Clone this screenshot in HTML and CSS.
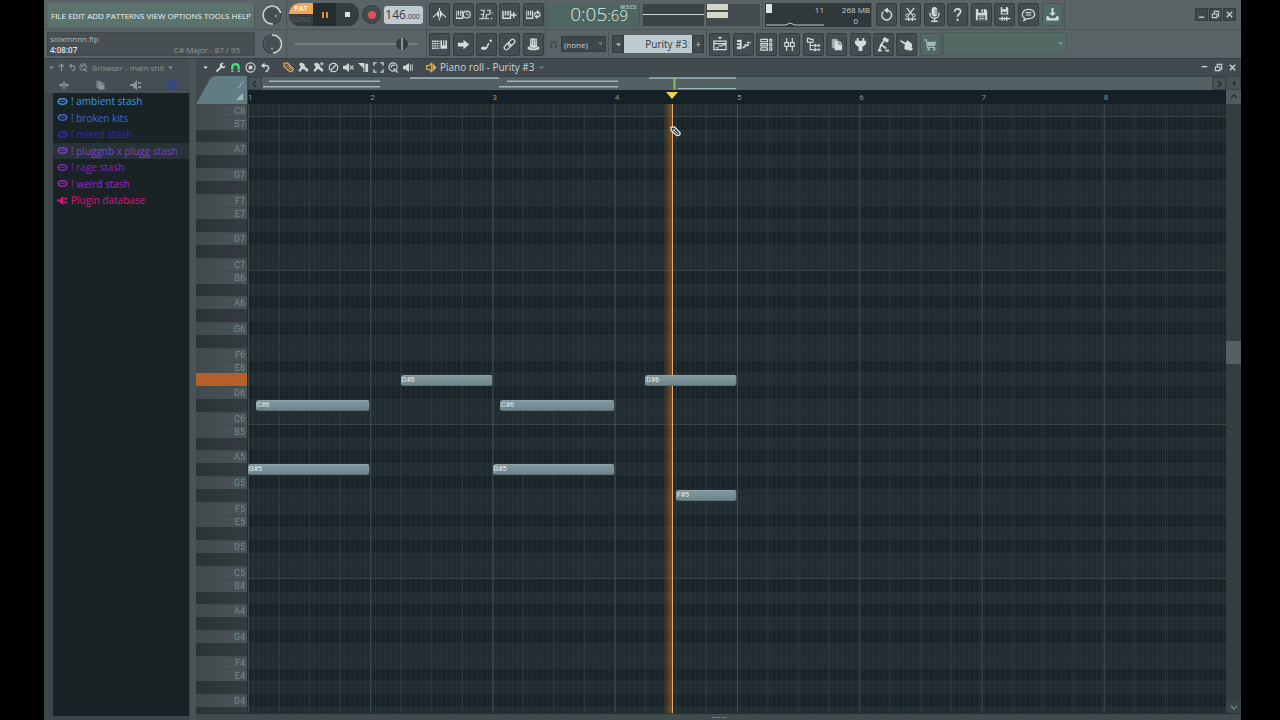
FILE: index.html
```html
<!DOCTYPE html>
<html lang="en">
<head>
<meta charset="utf-8">
<title>Piano roll - Purity #3</title>
<link rel="stylesheet" href="styles.css">
</head>
<body>
<svg class="sprite" aria-hidden="true">
  <symbol id="metronome" viewBox="0 0 16 16"><path d="M8 1v13M7.500 5 1 11M8.500 5l6.500 6" fill="none" stroke="currentColor" stroke-width="1.200"/><path d="M6.500 4h3l1.500 4-3 5-3-5z" fill="currentColor"/><path d="M8 4v8" stroke="#434c4f" stroke-width=".800"/></symbol>
  <symbol id="wait" viewBox="0 0 16 16"><path d="M0 4v8h7V8M2.500 4v5M5 4v5M7 4v3" fill="none" stroke="currentColor" stroke-width="1.400"/><circle cx="11.500" cy="8" r="3.700" fill="none" stroke="currentColor" stroke-width="1.300"/><path d="M11.500 6v2.300h2" fill="none" stroke="currentColor"/></symbol>
  <symbol id="count" viewBox="0 0 16 16"><path d="M1.500 3.500H5.500L4.800 8H2M4.800 8 4 12.500H0M8.500 3.500h3.500L11.300 8H8l-.700 4.500h3.500M5.500 11.500v1.500M14 5.500V7M13.500 11.500V13" fill="none" stroke="currentColor" stroke-width="1.200"/></symbol>
  <symbol id="overdub" viewBox="0 0 16 16"><path d="M1 4v8h8V4M3.700 4v5M6.400 4v5M12.500 5.500v6M9.500 8.500h6" fill="none" stroke="currentColor" stroke-width="1.600"/></symbol>
  <symbol id="looprec" viewBox="0 0 16 16"><path d="M0 4v8h7V4M2.400 4v5M4.800 4v5" fill="none" stroke="currentColor" stroke-width="1.400"/><path d="M9 9c0-3 2-4 4-3M15 7c0 3-2 4-4 3" fill="none" stroke="currentColor" stroke-width="1.500"/><path d="m12 3 3 3-3 2zM12 8l-3 2 3 3z" fill="currentColor"/></symbol>
  <symbol id="typing" viewBox="0 0 16 16"><path d="M0 4.500h8M0 7h8M0 9.500h8M0 12h8" stroke="currentColor" stroke-width="1.500" stroke-dasharray="1.800 .600"/><path d="M9 3.500h7v9H9z" fill="currentColor"/><path d="M11.300 3v6M13.700 3v6" stroke="#394346" stroke-width="1.100"/></symbol>
  <symbol id="arrow" viewBox="0 0 16 16"><path d="M2 6h6V3l6 5-6 5v-3H2z" fill="currentColor"/></symbol>
  <symbol id="slide" viewBox="0 0 16 16"><path d="M4 12c6 1 4-2 6.500-5.500" fill="none" stroke="currentColor" stroke-width="1.600"/><ellipse cx="5" cy="12" rx="3" ry="1.800" fill="currentColor"/><circle cx="12.500" cy="4" r="1.300" fill="currentColor"/></symbol>
  <symbol id="link" viewBox="0 0 16 16"><g fill="none" stroke="currentColor" stroke-width="1.400" transform="rotate(-45 8 8)"><rect x="1" y="5.700" width="8" height="4.600" rx="2.300"/><rect x="7" y="5.700" width="8" height="4.600" rx="2.300"/></g></symbol>
  <symbol id="hat" viewBox="0 0 16 16"><path d="M4.500 1.500h7l.400 8.500c1.600.300 2.600.900 2.600 1.700 0 3.300-13 3.300-13 0 0-.800 1-1.400 2.600-1.700z" fill="currentColor"/><path d="M5.800 2.500 5.500 9M8 3v6M10.200 2.500l.300 6.500M4 11c2 1.200 6 1.200 8 0" stroke="#6c787a" stroke-width=".800" fill="none"/></symbol>
  <symbol id="playlist" viewBox="0 0 16 16"><path d="M6 0h5L8.500 2.500z" fill="currentColor"/><path d="M2 4.500h13v9H2zM2 7h13M4 11.500h3M7 9.500h4M11 8.500h3" fill="none" stroke="currentColor" stroke-width="1.300"/></symbol>
  <symbol id="roll" viewBox="0 0 16 16"><path d="M1 3h5v10H1z" fill="currentColor"/><path d="M1 6h3M1 9.500h3" stroke="#394346" stroke-width="1.200"/><path d="M7 11h3V8.500h2.500V6H16" fill="none" stroke="currentColor" stroke-width="2" stroke-dasharray="2.500 .800"/></symbol>
  <symbol id="rack" viewBox="0 0 16 16"><path d="M2 2.500h7V5H2zM2 7h7v2.500H2zM2 11.500h7V14H2zM11.500 2.500h2V5h-2zM11.500 7h2v2.500h-2zM11.500 11.500h2V14h-2z" fill="none" stroke="currentColor" stroke-width="1.200"/></symbol>
  <symbol id="mixer" viewBox="0 0 16 16"><path d="M5 1v14M11 1v14" stroke="currentColor" stroke-width="1.200"/><path d="M3 6h4v4H3zM9 6h4v4H9z" fill="#394346" stroke="currentColor" stroke-width="1.200"/></symbol>
  <symbol id="tree" viewBox="0 0 16 16"><path d="M1.500 5.500v-4h2l1 1h3v3zM4.500 6v7.500H9M4.500 9H9" fill="none" stroke="currentColor" stroke-width="1.200"/><path d="M9 6.500 12 9l-3 2.500zM9 11l3 2.500L9 16zM12 8h3v2h-3zM12 12.500h3v2h-3z" fill="currentColor"/></symbol>
  <symbol id="copy" viewBox="0 0 16 16"><path d="M3 2h6v10H3z" fill="currentColor" opacity=".650"/><path d="M6 4h5l3 3v7H6z" fill="currentColor"/><path d="M10.500 4v3.500H14" fill="none" stroke="#566064"/></symbol>
  <symbol id="plug" viewBox="0 0 16 16"><path d="M4 1h2v3h4V1h2v3h2v2c0 2-2 3-4 4.500V15H6v-4.500C4 9 2 8 2 6V4h2z" fill="currentColor"/></symbol>
  <symbol id="lamp" viewBox="0 0 16 16"><path d="m9 0 5 3-2 3-5-3z" fill="currentColor"/><path d="M9 3.500 5.500 8l5.500 4.500M5.500 8l-2 6M2 14.500h4M10 14.500h4" fill="none" stroke="currentColor" stroke-width="1.800"/></symbol>
  <symbol id="hand" viewBox="0 0 16 16"><path d="M1 4.500 2 3.500 7 6l2-2.500 5 4-.500 4 1.500 1-2.500 2.500-1.500-1-4-.500-2-2 1.500-.500-1-1.500 1.500-1z" fill="currentColor"/></symbol>
  <symbol id="cart" viewBox="0 0 16 16"><path d="M1 3h2.500l1.300 8H13" fill="none" stroke="currentColor" stroke-width="1.300"/><path d="M4 5h10l-1.300 4.500H4.700z" fill="currentColor"/><circle cx="6" cy="13" r="1.300" fill="currentColor"/><circle cx="12" cy="13" r="1.300" fill="currentColor"/></symbol>
  <symbol id="undo" viewBox="0 0 16 16"><path d="M9 3.500a5.200 5.200 0 1 1-4.500 1.500" fill="none" stroke="currentColor" stroke-width="1.500"/><path d="M9.500.500v6L5 3.500z" fill="currentColor"/></symbol>
  <symbol id="cut" viewBox="0 0 16 16"><path d="m4 1 6.500 8M12 1 5.500 9M2 13h12M6 11v4M10 11v4" fill="none" stroke="currentColor" stroke-width="1.400"/><circle cx="4.500" cy="9" r="1.500" fill="none" stroke="currentColor"/><circle cx="11.500" cy="9" r="1.500" fill="none" stroke="currentColor"/></symbol>
  <symbol id="mic" viewBox="0 0 16 16"><rect x="5" y="0" width="6" height="10" rx="3" fill="currentColor"/><path d="M3 6c0 8 10 8 10 0M8 12v3M4.500 15.200h7" fill="none" stroke="currentColor" stroke-width="1.500"/><path d="M8 3h3M8 5h3M8 7h3" stroke="#566064" stroke-width=".800"/></symbol>
  <symbol id="help" viewBox="0 0 16 16"><path d="M4.800 5c0-4 6.500-4 6.500 0 0 2.500-3.300 2.500-3.300 5.500M8 12.500V15" fill="none" stroke="currentColor" stroke-width="1.900"/></symbol>
  <symbol id="disk" viewBox="0 0 16 16"><path d="M2 2h10l2 2v10H2z" fill="currentColor"/><path d="M4.500 2h6v4h-6zM4 9h8v5H4z" fill="#465154"/><path d="M8 2.500h1.500v3H8zM5 10h6v1H5zM5 12h6v1H5z" fill="currentColor"/></symbol>
  <symbol id="saveas" viewBox="0 0 16 16"><path d="M4 0h7l1 1v7H4z" fill="currentColor"/><path d="M5.500 0h4v2.500h-4zM5.500 5h5v2h-5z" fill="#465154"/><path d="M2 12.500h12M5.500 10v5M8 11v3M10.500 10v5" stroke="currentColor" stroke-width="1.300"/></symbol>
  <symbol id="chat" viewBox="0 0 16 16"><path d="M3 14.500 4 12C-1 9 2 2.500 8 2.500s9 6.500 4 9c-2 1-5 1-5 1z" fill="none" stroke="currentColor" stroke-width="1.300"/><path d="M5 6h6M5 8.500h6" stroke="currentColor" stroke-width="1.200"/></symbol>
  <symbol id="download" viewBox="0 0 16 16"><path d="M7 1h2v5h2.500L8 9.500 4.500 6H7zM1.500 9.500 4 10l1 2h6l1-2 2.500-.500v5h-13z" fill="currentColor"/></symbol>
  <symbol id="min" viewBox="0 0 10 10"><path d="M2 8h6" stroke="currentColor" stroke-width="1.500"/></symbol>
  <symbol id="dash" viewBox="0 0 10 10"><path d="M2 4h6" stroke="currentColor" stroke-width="1.500"/></symbol>
  <symbol id="max" viewBox="0 0 10 10"><path d="M1.500 4.500h5v4h-5zM3.500 4V1.500h5V7H7" fill="none" stroke="currentColor" stroke-width="1.200"/></symbol>
  <symbol id="close" viewBox="0 0 10 10"><path d="m2 2 6 6M8 2 2 8" stroke="currentColor" stroke-width="1.500"/></symbol>
  <symbol id="down" viewBox="0 0 10 10"><path d="M1.500 3.500h7L5 7z" fill="currentColor"/></symbol>
  <symbol id="up" viewBox="0 0 12 12"><path d="M6 11V2M3 5l3-3.500L9 5" fill="none" stroke="currentColor" stroke-width="1.600"/></symbol>
  <symbol id="back" viewBox="0 0 12 12"><path d="M4 3.800h2c5 0 4 5 0 7" fill="none" stroke="currentColor" stroke-width="1.700"/><path d="M5 .500v6.500L1 3.800z" fill="currentColor"/></symbol>
  <symbol id="search" viewBox="0 0 12 12"><circle cx="5.500" cy="5.500" r="4.500" fill="none" stroke="currentColor" stroke-width="1.200"/><path d="M3.500 6c0-3 3-3 4-2M6 7l4.500 4.500" fill="none" stroke="currentColor" stroke-width="1.500"/></symbol>
  <symbol id="wave" viewBox="0 0 12 12"><path d="M1 6h10M3.500 4v4M6 2v8M8.500 4v4" stroke="currentColor" stroke-width="1.300"/></symbol>
  <symbol id="speaker" viewBox="0 0 12 12"><path d="M0 5h3l4-4v10L3 8V7H0zM8 3h3v1.800H8zM8 7.200h3V9H8z" fill="currentColor"/></symbol>
  <symbol id="channel" viewBox="0 0 12 12"><path d="M.700 4h2.500L6 1.500v9L3.200 8H.700z" fill="none" stroke="currentColor" stroke-width="1.300"/><path d="M7 1l4.500 5L7 11z" fill="currentColor"/></symbol>
  <symbol id="globe" viewBox="0 0 12 12"><circle cx="6" cy="6" r="5.500" fill="currentColor"/><path d="M1 4h10M1 8h10M6 1v10" stroke="#464f58" stroke-width=".500"/></symbol>
  <symbol id="lips" viewBox="0 0 12 12"><ellipse cx="6" cy="6" rx="4.500" ry="3" fill="none" stroke="currentColor" stroke-width="1.500"/><path d="M0 6h2M10 6h2M3.500 6h5" stroke="currentColor" stroke-width=".800"/></symbol>
  <symbol id="wrench" viewBox="0 0 12 12"><path d="m1.500 10.500 5-5" stroke="currentColor" stroke-width="2.200"/><path d="M9.500 1C6 0 4.500 3 5.500 5.500 8 8 11 7 11.500 4L9 5 7.500 3.500z" fill="currentColor"/></symbol>
  <symbol id="magnet" viewBox="0 0 12 12"><path d="M2.500 11V6c0-5 7-5 7 0v5" fill="none" stroke="currentColor" stroke-width="2.500"/><path d="M1 8.700h3M8 8.700h3" stroke="#3b4549" stroke-width=".800"/></symbol>
  <symbol id="target" viewBox="0 0 12 12"><circle cx="6" cy="6" r="5" fill="none" stroke="currentColor" stroke-width="1.200"/><path d="M4 4h4v4H4z" fill="currentColor"/></symbol>
  <symbol id="pencil" viewBox="0 0 12 12"><path d="M1 1.500 5 1l6 6.500c.500 2-1.500 3.500-3.500 3L1.500 5z" fill="none" stroke="currentColor" stroke-width="1.400"/><path d="m3.500 3.500 5.500 5.500M5 3l5 5" stroke="currentColor" stroke-width="1"/></symbol>
  <symbol id="brush" viewBox="0 0 12 12"><path d="m1 2 3-1.500 3 2 .500 2.500 4 3.500L10 11 6.500 8 5 7.500 2 11 .500 9 3 6z" fill="currentColor"/></symbol>
  <symbol id="brush-plus" viewBox="0 0 12 12"><path d="m1 2 3-1.500 3 2 .500 2.500 4 3.500L10 11 6.500 8 5 7.500 2 11 .500 9 3 6zM9 0h1.200v4H9z" fill="currentColor"/><path d="M7.800 2h3.800" stroke="currentColor" stroke-width="1.200"/></symbol>
  <symbol id="no" viewBox="0 0 12 12"><circle cx="6" cy="6" r="4.600" fill="none" stroke="currentColor" stroke-width="1.300"/><path d="m3 9 6-6" stroke="currentColor" stroke-width="1.300"/></symbol>
  <symbol id="mute" viewBox="0 0 12 12"><path d="M0 4h2.500L6.500 1v10l-4-3H0z" fill="currentColor"/><path d="m7.500 4 4 4M11.500 4l-4 4" stroke="currentColor" stroke-width="1.300"/></symbol>
  <symbol id="slice" viewBox="0 0 12 12"><path d="M0 1h7v7zM6 8h1v3H6zM8 2h3v9H8z" fill="currentColor"/></symbol>
  <symbol id="select" viewBox="0 0 12 12"><path d="M1 4V1h3M8 1h3v3M11 8v3H8M4 11H1V8" fill="none" stroke="currentColor" stroke-width="1.400"/></symbol>
  <symbol id="play" viewBox="0 0 12 12"><path d="M0 4h2.500L6.500 1v10l-4-3H0zM7.500 2.500h1v7h-1zM9.500 2.500h1v7h-1z" fill="currentColor"/></symbol>
</svg>

<div class="app">
  <header class="toolbar">
    <div class="bar bar-top">
      <nav class="menu" aria-label="Main menu">
        <button>FILE</button><button>EDIT</button><button>ADD</button><button>PATTERNS</button><button>VIEW</button><button>OPTIONS</button><button>TOOLS</button><button>HELP</button>
      </nav>
      <div class="knob-cell"><svg viewBox="0 0 20 20" role="img" aria-label="Main volume"><circle cx="10" cy="10" r="9" fill="none" stroke="#3b4447" stroke-width="1.500"/><circle cx="10" cy="10" r="7.500" fill="#454e51"/><path d="M11 19A9 9 0 1 1 18.800 8" fill="none" stroke="#d0d8d9" stroke-width="1.500"/><circle cx="14" cy="11" r="1" fill="#aab3b5"/></svg></div>
      <div class="transport">
        <div class="pill">
          <div class="mode"><button class="pat">PAT</button><button class="song">SONG</button></div>
          <button class="pause" aria-label="Pause"><i></i><i></i></button>
          <button class="stop" aria-label="Stop"><i></i></button>
        </div>
        <button class="record" aria-label="Record"><i></i></button>
        <div class="tempo">146<small>.000</small><span>:</span></div>
      </div>
      <div class="tools five">
        <button aria-label="Metronome"><svg><use href="#metronome"/></svg></button><button aria-label="Wait for input"><svg><use href="#wait"/></svg></button><button aria-label="Countdown"><svg><use href="#count"/></svg></button><button aria-label="Overdub"><svg><use href="#overdub"/></svg></button><button aria-label="Loop record"><svg><use href="#looprec"/></svg></button>
      </div>
      <div class="clock"><span>0:05<small>:69</small></span><sup>M:S:CS</sup></div>
      <div class="scope"><div class="osc"></div><div class="vu"><i></i></div></div>
      <div class="cpu"><i class="cpu-load"></i><span class="cpu-poly">11</span><span class="cpu-mem">268 MB</span><span class="cpu-count">0</span>
        <svg viewBox="0 0 60 4" preserveAspectRatio="none"><path d="M0 3h20l5-2 5 2h30" fill="none" stroke="#c4cdcf"/></svg></div>
      <div class="tools eight">
        <button aria-label="Undo"><svg><use href="#undo"/></svg></button><button aria-label="Cut"><svg><use href="#cut"/></svg></button><button aria-label="Record audio"><svg><use href="#mic"/></svg></button><button aria-label="Help"><svg><use href="#help"/></svg></button><button aria-label="Save"><svg><use href="#disk"/></svg></button><button aria-label="Save new version"><svg><use href="#saveas"/></svg></button><button aria-label="Chat"><svg><use href="#chat"/></svg></button><button class="green" aria-label="Download"><svg><use href="#download"/></svg></button>
      </div>
      <div class="window-buttons"><button aria-label="Minimize"><svg><use href="#min"/></svg></button><button aria-label="Restore"><svg><use href="#max"/></svg></button><button aria-label="Close"><svg><use href="#close"/></svg></button></div>
    </div>
    <div class="bar bar-bottom">
      <div class="hint"><span>solxmnnn.flp</span><div><b>4:08:07</b><span>C# Major - 87 / 95</span></div></div>
      <div class="knob-cell"><svg viewBox="0 0 20 20" role="img" aria-label="Main pitch"><circle cx="10" cy="10" r="9" fill="none" stroke="#3b4447" stroke-width="1.500"/><circle cx="10" cy="10" r="7.500" fill="#454e51"/><path d="M10 1a9 9 0 0 1 1 18" fill="none" stroke="#d0d8d9" stroke-width="1.500"/><circle cx="10" cy="14.500" r="1" fill="#aab3b5"/></svg></div>
      <div class="position"><input type="range" min="0" max="100" value="91" aria-label="Song position"></div>
      <div class="tools five">
        <button aria-label="Typing keyboard"><svg><use href="#typing"/></svg></button><button aria-label="Scroll"><svg><use href="#arrow"/></svg></button><button aria-label="Slide"><svg><use href="#slide"/></svg></button><button aria-label="Link controllers"><svg><use href="#link"/></svg></button><button aria-label="Metronome options"><svg><use href="#hat"/></svg></button>
      </div>
      <div class="snap"><svg><use href="#magnet"/></svg><label class="combo"><select aria-label="Snap"><option>(none)</option></select><svg><use href="#down"/></svg></label></div>
      <div class="pattern"><button aria-label="Pattern menu"><svg><use href="#down"/></svg></button><div class="pattern-name">Purity #3<span>:</span></div><button>+</button></div>
      <div class="tools ten">
        <button aria-label="Playlist"><svg><use href="#playlist"/></svg></button><button aria-label="Piano roll"><svg><use href="#roll"/></svg></button><button aria-label="Channel rack"><svg><use href="#rack"/></svg></button><button aria-label="Mixer"><svg><use href="#mixer"/></svg></button><button aria-label="Browser"><svg><use href="#tree"/></svg></button><button aria-label="Project picker"><svg><use href="#copy"/></svg></button><button aria-label="Plugins"><svg><use href="#plug"/></svg></button><button aria-label="Tempo tapper"><svg><use href="#lamp"/></svg></button><button aria-label="Touch"><svg><use href="#hand"/></svg></button><button class="green shop" aria-label="Shop"><svg><use href="#cart"/></svg></button>
      </div>
      <div class="news"><svg><use href="#down"/></svg></div>
      <div></div>
    </div>
  </header>

  <main class="workspace">
    <aside class="browser">
      <div class="browser-title"><svg class="tiny"><use href="#down"/></svg><svg><use href="#up"/></svg><svg><use href="#back"/></svg><svg><use href="#search"/></svg><span>Browser - main shit</span><svg class="tiny"><use href="#down"/></svg></div>
      <div class="browser-tabs"><button aria-label="All"><svg><use href="#wave"/></svg></button><button aria-label="Files"><svg><use href="#copy"/></svg></button><button aria-label="Plugins"><svg><use href="#speaker"/></svg></button><button class="web" aria-label="Online"><svg><use href="#globe"/></svg></button></div>
      <ul class="tree">
        <li class="c1"><svg><use href="#lips"/></svg>! ambient stash</li>
        <li class="c2"><svg><use href="#lips"/></svg>! broken kits</li>
        <li class="c3"><svg><use href="#lips"/></svg>! mixed stash</li>
        <li class="c4 current"><svg><use href="#lips"/></svg>! pluggnb x plugg stash</li>
        <li class="c5"><svg><use href="#lips"/></svg>! rage stash</li>
        <li class="c6"><svg><use href="#lips"/></svg>! weird stash</li>
        <li class="c7"><svg><use href="#speaker"/></svg>Plugin database</li>
      </ul>
    </aside>

    <section class="roll">
      <div class="roll-title">
        <button aria-label="Menu"><svg class="tiny"><use href="#down"/></svg></button><button aria-label="Tools"><svg><use href="#wrench"/></svg></button><button class="lime" aria-label="Snap"><svg><use href="#magnet"/></svg></button><button aria-label="Stamp"><svg><use href="#target"/></svg></button><button aria-label="Undo"><svg><use href="#back"/></svg></button>
        <button class="amber gap" aria-label="Draw"><svg><use href="#pencil"/></svg></button><button aria-label="Paint"><svg><use href="#brush"/></svg></button><button aria-label="Paint drums"><svg><use href="#brush-plus"/></svg></button><button aria-label="Delete"><svg><use href="#no"/></svg></button><button aria-label="Mute"><svg><use href="#mute"/></svg></button><button aria-label="Slice"><svg><use href="#slice"/></svg></button><button aria-label="Select"><svg><use href="#select"/></svg></button><button aria-label="Zoom"><svg><use href="#search"/></svg></button><button aria-label="Playback"><svg><use href="#play"/></svg></button>
        <h1><svg class="amber"><use href="#channel"/></svg>Piano roll - Purity #3<svg class="tiny"><use href="#down"/></svg></h1>
        <div class="roll-window"><button aria-label="Minimize"><svg><use href="#dash"/></svg></button><button aria-label="Restore"><svg><use href="#max"/></svg></button><button aria-label="Close"><svg><use href="#close"/></svg></button></div>
      </div>
      <div class="roll-body">
        <div class="corner"><svg viewBox="0 0 51 28" preserveAspectRatio="none"><path d="M0 28 14 3Q16 0 20 0h31v28z" fill="#627c83"/><path d="M41 12c5 0 2-6 7-6" fill="none" stroke="#a5b4b7"/><path d="M40 24h7v-7z" fill="#a5b4b7"/></svg></div>
        <div class="overview">
          <button aria-label="Scroll left"><svg viewBox="0 0 10 10"><path d="M6 2 3 5l3 3" fill="none" stroke="#222b2e" stroke-width="1.400"/></svg></button>
          <svg viewBox="0 0 950 14" preserveAspectRatio="none"><path d="M7 4.500h111M1 10.500h117M148 1h89M245 4.500h111M237 10.500h119M387 1h87M416 12.500h58" stroke="#9db4ba" stroke-width="1.500"/><path d="M412.500 0v14" stroke="#8ebf5a" stroke-width="2"/></svg>
          <button aria-label="Scroll right"><svg viewBox="0 0 10 10"><path d="m4 2 3 3-3 3" fill="none" stroke="#222b2e" stroke-width="1.400"/></svg></button>
        </div>
        <button class="side-btn" aria-label="Preview"><svg viewBox="0 0 10 10"><path d="M4 3h1.500L7 5 5.500 7H4z" fill="#222b2e"/></svg></button>
        <div class="ruler"><span>1</span><span>2</span><span>3</span><span>4</span><span>5</span><span>6</span><span>7</span><span>8</span><i></i></div>
        <div class="keys"><div class="rows" id="keys"></div></div>
        <div class="grid">
          <div class="rows lanes" id="lanes"></div>
          <div class="lines"></div>
          <div class="playhead"></div>
          <div class="notes" id="notes"></div>
          <svg class="cursor" viewBox="0 0 12 12"><path d="M1 1.500 5 1l6 6.500c.500 2-1.500 3.500-3.500 3L1.500 5z" fill="#30383a" stroke="#e4e9e9" stroke-width="1.400"/><path d="m4 4 5 5M6 3.500 3.500 5" stroke="#e4e9e9"/></svg>
        </div>
        <div class="scroll"><button aria-label="Scroll up"><svg viewBox="0 0 10 10"><path d="m2 6 3-3 3 3" fill="none" stroke="#273033" stroke-width="1.300"/></svg></button><div class="track"><i></i></div><button aria-label="Scroll down"><svg viewBox="0 0 10 10"><path d="m2 4 3 3 3-3" fill="none" stroke="#778285" stroke-width="1.300"/></svg></button></div>
      </div>
      <footer class="grip"><i></i></footer>
    </section>
  </main>
</div>
<script src="roll.js"></script>
</body>
</html>
```

FILE: roll.js
```js
// Lanes run downward from C8; a 12-row octave repeats below it.
const NAMES = ["C", "B", "A#", "A", "G#", "G", "F#", "F", "E", "D#", "D", "C#"];
const IN_SCALE = ["C", "A#", "G#", "F#", "F", "D#", "C#"];
const ROWS = 48;
const BARS = 8;
const keys = document.getElementById("keys");
const lanes = document.getElementById("lanes");
const notes = document.getElementById("notes");
const rowOf = {};

for (let i = 0; i < ROWS; i++) {
  const name = NAMES[i % 12];
  const octave = i % 12 === 0 ? 8 - i / 12 : 7 - Math.floor(i / 12);
  const label = name + octave;
  rowOf[label] = i;
  const key = document.createElement("div");
  const sharp = name.includes("#");
  key.className = "key " + (sharp ? "black" : "white");
  if (label === "D#6") key.classList.add("pressed");
  if (!sharp) key.textContent = label;
  keys.append(key);
  const lane = document.createElement("div");
  lane.className = IN_SCALE.includes(name) ? "lane scale" : "lane";
  if (name === "C") lane.classList.add("octave");
  lanes.append(lane);
}

// [pitch, start bar, end bar]
[["G#5", 0, 1], ["C#6", 0.0625, 1], ["D#6", 1.25, 2], ["C#6", 2.0625, 3],
 ["G#5", 2, 3], ["D#6", 3.25, 4], ["F#5", 3.5, 4]].forEach(([pitch, start, end]) => {
  const note = document.createElement("div");
  note.className = "note";
  note.textContent = pitch;
  note.style.left = start / BARS * 100 + "%";
  note.style.width = (end - start) / BARS * 100 + "%";
  note.style.top = rowOf[pitch] / ROWS * 100 + "%";
  notes.append(note);
});
```

FILE: styles.css
```css
* { box-sizing: border-box; }
body { margin: 0; background: #000; color: #c6cfd0; font: 10px "Open Sans", "Noto Sans", sans-serif; }
button { margin: 0; padding: 0; border: 0; background: none; color: inherit; font: inherit; display: flex; align-items: center; justify-content: center; }
svg { display: block; }
.sprite { position: absolute; width: 0; height: 0; }
.app { height: 100vh; margin: 0 39px 0 44px; display: flex; flex-direction: column; background: #3f494c; overflow: hidden; }

/* Toolbar */
.toolbar { background: #5a6366; border-bottom: 1px solid #353e42; }
.bar { display: grid; height: 29px; grid-template-rows: 100%; }
.bar > * { min-width: 0; min-height: 0; border-right: 1px solid #4b5457; }
.bar > :last-child { border-right: 0; }
.bar-top { grid-template-columns: 214px 29px 140px 119px 95px 122px 111px 191px 1fr; }
.bar-bottom { grid-template-columns: 214px 29px 140px 119px 63px 98px 236px 124px 1fr; border-top: 1px solid #4b5457; }
.menu { margin: 3px 3px 2px 4px; padding: 0 3px; background: #5b726d; display: flex; align-items: center; justify-content: space-between; color: #eef4f3; font-size: 8px; }
.hint { margin: 2px 3px 2px 3px; padding: 0 2px; background: #474f52; border: 1px solid #41494c; font-size: 8px; line-height: 11px; color: #b0b9bb; }
.hint div { display: flex; justify-content: space-between; padding-right: 12px; }
.hint b { color: #e2e8e8; font-weight: 600; }
.hint div span { color: #8e989a; }
.knob-cell { display: flex; align-items: center; justify-content: center; }
.knob-cell svg { width: 20px; height: 20px; }
.transport { display: flex; align-items: center; gap: 3px; padding-left: 2px; }
.pill { width: 70px; height: 23px; display: grid; grid-template-columns: 24px 23px 23px; border-radius: 11px; overflow: hidden; background: #353d40; }
.mode { display: grid; grid-template-rows: 11px 11px; font-size: 7px; line-height: 10px; }
.pat { background: #eea65a; color: #fff4df; font-weight: 700; }
.song { color: #596366; }
.pause { background: #252c2f; gap: 2px; }
.pause i { width: 2px; height: 6px; background: #e48b38; }
.stop i { width: 5px; height: 5px; background: #dde3e4; }
.record { width: 19px; height: 19px; border-radius: 50%; background: #414a4d; border: 1px solid #343c3f; }
.record i { width: 8px; height: 8px; border-radius: 50%; background: #e64f56; }
.tempo { width: 39px; height: 18px; border-radius: 3px; background: #c0cbd1; color: #303a3f; font-size: 12px; line-height: 18px; display: flex; align-items: baseline; justify-content: center; }
.tempo small { font-size: 7px; }
.tempo span { font-size: 7px; color: #87939a; }
.tools { display: grid; padding: 0 0 0 1px; align-items: center; justify-items: center; }
.five { grid-template-columns: repeat(5, 1fr); }
.eight { grid-template-columns: repeat(8, 1fr); }
.ten { grid-template-columns: repeat(10, 1fr); }
.tools button { width: 21px; height: 23px; border: 1px solid #353d40; border-radius: 2px; background: #434c4f; color: #d3dcdd; }
.tools svg { width: 15px; height: 15px; }
.tools .green { background: #526a66; border-color: #455854; }
.tools .shop { color: #a3b9b3; }
.clock { margin: 3px 1px 2px 1px; background: #4f6560; color: #dfe9e6; display: flex; justify-content: flex-end; font-size: 19px; line-height: 23px; font-weight: 300; position: relative; padding-right: 11px; white-space: nowrap; }
.clock small { font-size: 15px; }
.clock sup { position: absolute; right: 3px; top: 1px; font-size: 5px; line-height: 6px; font-weight: 400; }
.scope { display: grid; grid-template-columns: 61px 54px; gap: 2px; padding: 4px 2px 3px; }
.osc { background: linear-gradient(#d0d8d8, #d0d8d8) center 10px / 100% 1px no-repeat #3a4245; }
.vu { background: #434b4e; padding-left: 1px; }
.vu i { display: block; width: 21px; height: 14px; background: linear-gradient(#d5d8c8 6px, #434b4e 6px 8px, #d5d8c8 8px); }
.cpu { margin: 3px 2px 2px 2px; background: #30383b; color: #c6cfd0; font-size: 8px; line-height: 11px; display: grid; grid-template-columns: 8px 1fr 46px; padding: 1px; grid-template-rows: 11px 11px; text-align: right; }
.cpu-load { width: 6px; height: 9px; background: #dce4e5; }
.cpu svg { grid-area: 2 / 1 / 3 / 3; width: 100%; height: 4px; align-self: end; }
.cpu-count { grid-area: 2 / 3; padding-right: 12px; }
.window-buttons { display: flex; justify-content: flex-end; align-items: center; gap: 1px; padding-right: 5px; }
.window-buttons button { width: 13px; height: 13px; background: #40484b; border: 1px solid #343c3f; }
.window-buttons svg { width: 9px; height: 9px; }
.position { display: flex; align-items: center; padding: 0 8px; }
.position input { appearance: none; width: 100%; height: 14px; margin: 0; background: linear-gradient(#737c7f, #737c7f) center / 100% 2px no-repeat; }
.position input::-webkit-slider-thumb { appearance: none; width: 12px; height: 12px; border-radius: 50%; background: linear-gradient(90deg, #353d40 5px, #8a9496 5px 7px, #353d40 7px); }
.snap { display: flex; align-items: center; gap: 3px; padding-left: 3px; }
.snap > svg { width: 9px; height: 9px; color: #454e51; }
.combo { position: relative; width: 45px; height: 16px; }
.combo select { appearance: none; width: 100%; height: 16px; border: 1px solid #343c3f; background: #3e474a; color: #c6cfd0; font: 8px "Open Sans", sans-serif; padding: 0 2px; }
.combo svg { position: absolute; right: 2px; top: 4px; width: 7px; height: 7px; color: #7b8689; }
.pattern { display: grid; grid-template-columns: 12px 1fr 12px; align-items: center; padding: 0 2px 0 3px; }
.pattern button { height: 18px; background: #40494c; border: 1px solid #343c3f; }
.pattern button svg { width: 7px; height: 7px; }
.pattern-name { height: 18px; background: #becbd1; color: #2d393f; text-align: right; padding-right: 2px; font-size: 10px; line-height: 18px; white-space: nowrap; }
.pattern-name span { color: #87939a; }
.news { margin: 2px 0 3px; border: 1px solid #4a605b; background: #526964; display: flex; align-items: center; justify-content: flex-end; padding-right: 2px; color: #8aa19b; }
.news svg { width: 7px; height: 7px; }

/* Browser */
.workspace { flex: 1; min-height: 0; display: grid; grid-template-columns: 146px 1fr; }
.browser { display: flex; flex-direction: column; min-height: 0; background: #3d464a; padding-bottom: 4px; }
.browser-title { height: 17px; display: flex; align-items: center; gap: 2px; padding-left: 4px; background: #454e52; color: #8a9598; font-size: 8px; }
.browser-title svg { width: 9px; height: 9px; }
.browser-title span { margin: 0 1px 0 2px; }
.browser-title .tiny { width: 7px; height: 7px; }
.browser-tabs { height: 17px; display: grid; grid-template-columns: repeat(4, 36px); background: #454e52; color: #8a9598; padding-left: 2px; }
.browser-tabs svg { width: 12px; height: 12px; }
.browser-tabs .web { color: #35478f; }
.tree { flex: 1; margin: 0 1px 0 9px; padding: 0; list-style: none; background: #192326; display: grid; grid-template-rows: repeat(7, minmax(16px, 2.65%)); align-content: start; font-size: 10px; line-height: 16px; }
.tree li { display: flex; align-items: center; gap: 3px; padding-left: 4px; white-space: nowrap; }
.tree svg { width: 11px; height: 11px; flex: none; }
.current { background: #293236; }
.c1 { color: #3c98e2; } .c2 { color: #3a69d8; } .c3 { color: #3429b4; } .c4 { color: #7a43cf; }
.c5 { color: #8a22c8; } .c6 { color: #b01cca; } .c7 { color: #d8167f; }

/* Piano roll */
.roll { display: flex; flex-direction: column; min-width: 0; min-height: 0; border-left: 6px solid #4a5457; }
.roll-title { height: 17px; display: flex; align-items: center; padding: 0 2px; background: #414b4f; color: #ccd5d6; }
.roll-title button { width: 15px; height: 15px; }
.roll-title button svg { width: 11px; height: 11px; }
.roll-title button .tiny { width: 7px; height: 7px; }
.roll-title .gap { margin-left: 8px; }
.roll-title h1 { margin: 0 auto 0 10px; display: flex; align-items: center; gap: 3px; font-size: 10px; font-weight: 400; line-height: 15px; }
.roll-title h1 svg { width: 11px; height: 11px; }
.roll-title h1 .tiny { width: 7px; height: 7px; color: #7b8689; }
.amber { color: #e8a63a; }
.lime { color: #4bdc83; }
.roll-window { display: flex; }
.roll-title .roll-window button { width: 14px; }
.roll-title .roll-window svg { width: 9px; height: 9px; }
.roll-body { flex: 1; min-height: 0; display: grid; grid-template-columns: 52px 1fr 15px; grid-template-rows: 14px 14px 1fr; }
.corner { grid-area: 1 / 1 / 3 / 2; padding-right: 1px; }
.corner svg { width: 100%; height: 100%; }
.overview { display: grid; grid-template-columns: 14px 1fr 14px; background: #536064; border-top: 1px solid #39434a; min-width: 0; }
.overview svg { width: 100%; height: 13px; }
.overview button, .side-btn { background: #495356; border: 1px solid #3b4548; }
.overview button svg, .side-btn svg { width: 10px; height: 10px; }
.ruler { grid-column: 2; background: #152127; display: grid; grid-template-columns: repeat(8, 1fr); color: #8b9698; font: 8px/15px Roboto, sans-serif; position: relative; }
.ruler i { position: absolute; left: 43.400%; top: 2px; margin-left: -6px; border: 6px solid transparent; border-top: 7px solid #f0d052; border-bottom: 0; }
.keys { grid-column: 1; overflow: hidden; background: #30383b; min-height: 0; border-right: 1px solid #222b2e; }
.rows { display: grid; grid-template-rows: repeat(48, 1fr); height: 101.150%; }
.key { min-height: 0; color: #7d8789; text-align: right; padding-right: 2px; font: 9px/12px Roboto, sans-serif; overflow: hidden; }
.white { background: linear-gradient(90deg, #40494c, #4b5457); border-top: 1px solid #40494b; }
.black { background: linear-gradient(90deg, #2b3336, #343c3f); }
.pressed { background: #b5602a; }
.grid { grid-column: 2; position: relative; overflow: hidden; min-height: 0; background: #1a252a; }
.lane { min-height: 0; }
.scale { background: #222d32; border-top: 1px solid #263136; }
.octave { border-bottom: 1px solid #36434a; }
.lines { position: absolute; inset: 0; background:
  linear-gradient(90deg, #4a585c90 1px, transparent 1px) 0 0 / calc(100% / 8) 100%,
  linear-gradient(90deg, #3a484d80 1px, transparent 1px) 0 0 / calc(100% / 32) 100%,
  linear-gradient(90deg, #34434950 1px, transparent 1px) 0 0 / calc(100% / 192) 100%; }
.notes { position: absolute; inset: 0; height: 101.150%; }
.note { position: absolute; height: 11px; margin-top: 1px; border-radius: 3px; background: linear-gradient(#82989f, #6e858c); border: 1px solid; border-color: #8da2a6 #3f5055 #5e7379 #8da2a6; color: #e6eeee; font: 7px/9px Roboto, sans-serif; }
.playhead { position: absolute; top: 0; bottom: 0; left: 43.400%; width: 10px; margin-left: -9px; background: linear-gradient(90deg, #a35a1c00, #a35a1cb0 9px, #e8ab70 9px); }
.cursor { position: absolute; left: 43.400%; top: 22px; width: 11px; height: 11px; margin-left: -2px; }
.scroll { grid-area: 2 / 3 / 4 / 4; display: grid; grid-template-rows: 14px 1fr 13px; background: #343e40; }
.scroll button { background: #505b5e; }
.scroll button:last-child { background: #3a4446; }
.scroll svg { width: 10px; height: 10px; }
.track { position: relative; }
.track i { position: absolute; left: 0; right: 0; top: 39.800%; height: 23px; background: #535f61; }
.grip { height: 7px; background: #414b4e; border-top: 1px solid #262f32; display: flex; justify-content: center; align-items: center; }
.grip i { width: 14px; height: 1px; background: repeating-linear-gradient(90deg, #7d8789 0 2px, transparent 2px 3px); }
```
